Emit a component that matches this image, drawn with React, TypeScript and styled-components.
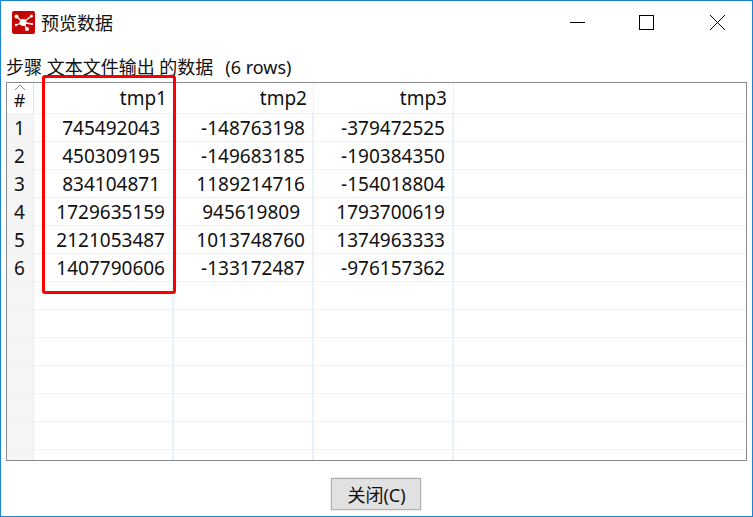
import { createGlobalStyle, styled } from 'styled-components';

const GlobalStyle = createGlobalStyle`
  html, body {
    margin: 0;
    padding: 0;
    background: #fff;
  }
  body {
    font-family: "Noto Sans", "Noto Sans CJK SC", sans-serif;
    color: #111;
  }
`;

const columns = ['tmp1', 'tmp2', 'tmp3'];

// trailing blanks are in the source data, the numbers are formatted that way
const rows = [
  ['745492043 ', '-148763198', '-379472525'],
  ['450309195 ', '-149683185', '-190384350'],
  ['834104871 ', '1189214716', '-154018804'],
  ['1729635159', '945619809 ', '1793700619'],
  ['2121053487', '1013748760', '1374963333'],
  ['1407790606', '-133172487', '-976157362'],
];

const EMPTY_ROWS = 7;

const AppIcon = () => (
  <svg width="23" height="23" viewBox="0 0 23 23">
    <rect width="23" height="23" rx="2" fill="#c70404" />
    <g stroke="#fff" strokeWidth="1.3" strokeLinecap="round">
      <line x1="11" y1="11.5" x2="4.5" y2="5.5" />
      <line x1="11" y1="11.5" x2="4" y2="14" />
      <line x1="11" y1="11.5" x2="15" y2="18" />
      <line x1="11" y1="11.5" x2="19.5" y2="5" />
      <line x1="11" y1="11.5" x2="20" y2="13" />
    </g>
    <circle cx="11" cy="11.5" r="3.4" fill="#fff" />
    <circle cx="4.5" cy="5.5" r="2" fill="#fff" />
    <circle cx="19.5" cy="5" r="1.5" fill="#fff" />
    <circle cx="15" cy="18" r="2" fill="#fff" />
    <circle cx="4" cy="14" r="1.2" fill="#fff" />
    <circle cx="20" cy="13" r="1.1" fill="#fff" />
  </svg>
);

const MinimizeIcon = () => (
  <svg width="15" height="15" viewBox="0 0 15 15">
    <line x1="0" y1="7.5" x2="15" y2="7.5" stroke="#000" strokeWidth="1" />
  </svg>
);

const MaximizeIcon = () => (
  <svg width="15" height="15" viewBox="0 0 15 15">
    <rect x="0.5" y="0.5" width="14" height="14" fill="none" stroke="#000" strokeWidth="1" />
  </svg>
);

const CloseIcon = () => (
  <svg width="15" height="15" viewBox="0 0 15 15">
    <path d="M0 0L15 15M15 0L0 15" fill="none" stroke="#000" strokeWidth="1" />
  </svg>
);

export default function App() {
  return (
    <>
      <GlobalStyle />
      <Styled.Window>
        <Styled.TitleBar>
          <AppIcon />
          <Styled.Title>预览数据</Styled.Title>
          <Styled.Caption>
            <Styled.CaptionButton><MinimizeIcon /></Styled.CaptionButton>
            <Styled.CaptionButton><MaximizeIcon /></Styled.CaptionButton>
            <Styled.CaptionButton><CloseIcon /></Styled.CaptionButton>
          </Styled.Caption>
        </Styled.TitleBar>
        <Styled.Label>
          步骤 文本文件输出 的数据
          <Styled.RowCount>(6 rows)</Styled.RowCount>
        </Styled.Label>
        <Styled.TableBox>
          <Styled.HeaderRow>
            <Styled.SortCell>
              <Styled.SortArrow viewBox="0 0 10 5" width="10" height="5">
                <path d="M0 5L5 0L10 5" fill="none" stroke="#888" strokeWidth="1" />
              </Styled.SortArrow>
              #
            </Styled.SortCell>
            {columns.map(name => (
              <Styled.HeaderCell key={name}>{name}</Styled.HeaderCell>
            ))}
          </Styled.HeaderRow>
          <Styled.Body>
            {rows.map((row, index) => (
              <Styled.Row key={index}>
                <Styled.IndexCell>{index + 1}</Styled.IndexCell>
                {row.map((value, col) => (
                  <Styled.Cell key={col}>{value}</Styled.Cell>
                ))}
              </Styled.Row>
            ))}
            {Array.from({ length: EMPTY_ROWS }, (_, index) => (
              <Styled.Row key={index}>
                <Styled.IndexCell />
                {columns.map(name => (
                  <Styled.Cell key={name} />
                ))}
              </Styled.Row>
            ))}
          </Styled.Body>
          <Styled.Highlight />
        </Styled.TableBox>
        <Styled.Footer>
          <Styled.CloseButton>关闭(C)</Styled.CloseButton>
        </Styled.Footer>
      </Styled.Window>
    </>
  );
}

const Styled = {
  Window: styled.div`
    box-sizing: border-box;
    width: 753px;
    height: 517px;
    border: 1px solid #1883d7;
    display: flex;
    flex-direction: column;
    background: #fff;
    overflow: hidden;
  `,
  TitleBar: styled.div`
    box-sizing: border-box;
    display: flex;
    align-items: center;
    height: 45px;
    padding: 0 0 2px 11px;
    flex-shrink: 0;
  `,
  Title: styled.div`
    margin-left: 6px;
    font-size: 18px;
    line-height: 24px;
  `,
  Caption: styled.div`
    margin-left: auto;
    display: flex;
  `,
  CaptionButton: styled.div`
    box-sizing: border-box;
    width: 70px;
    height: 43px;
    display: flex;
    align-items: center;
    justify-content: center;
    &:nth-child(2) {
      padding-right: 2px;
    }
  `,
  Label: styled.div`
    height: 36px;
    box-sizing: border-box;
    padding: 9px 0 0 5px;
    font-size: 18px;
    line-height: 24px;
    white-space: nowrap;
  `,
  RowCount: styled.span`
    margin-left: 12px;
  `,
  TableBox: styled.div`
    position: relative;
    box-sizing: border-box;
    display: flex;
    flex-direction: column;
    margin: 0 5px;
    height: 379px;
    border: 1px solid #868b90;
  `,
  HeaderRow: styled.div`
    display: flex;
    height: 31px;
    flex-shrink: 0;
    box-sizing: border-box;
    border-bottom: 1px solid #f0f0f0;
  `,
  Body: styled.div`
    flex: 1;
    min-height: 0;
    overflow: hidden;
  `,
  Row: styled.div`
    display: flex;
    height: 28px;
    box-sizing: border-box;
    border-bottom: 1px solid #f0f0f0;
  `,
  SortCell: styled.div`
    position: relative;
    width: 27px;
    box-sizing: border-box;
    padding: 5px 1px 0 0;
    text-align: center;
    font-size: 18px;
    line-height: 24px;
    border-right: 1px solid #e4e4e4;
  `,
  SortArrow: styled.svg`
    position: absolute;
    left: 8px;
    top: 2px;
  `,
  HeaderCell: styled.div`
    width: 140px;
    box-sizing: border-box;
    padding: 3px 6px 0 0;
    text-align: right;
    font-size: 19px;
    line-height: 24px;
    border-right: 1px solid #f1f1f1;
  `,
  IndexCell: styled.div`
    width: 27px;
    box-sizing: border-box;
    background: #f5f5f5;
    padding-right: 1px;
    text-align: center;
    font-size: 19px;
    line-height: 28px;
    border-right: 1px solid #e8eef8;
  `,
  Cell: styled.div`
    width: 140px;
    box-sizing: border-box;
    padding-right: 7px;
    text-align: right;
    font-size: 19px;
    line-height: 28px;
    white-space: pre;
    border-right: 2px solid #e8f0fa;
  `,
  Highlight: styled.div`
    position: absolute;
    left: 35px;
    top: -8px;
    width: 134px;
    height: 219px;
    box-sizing: border-box;
    border: 3px solid #fa0000;
    border-radius: 3px;
  `,
  Footer: styled.div`
    flex: 1;
    display: flex;
    justify-content: center;
    align-items: flex-start;
    padding: 17px 1px 0 0;
  `,
  CloseButton: styled.button`
    width: 90px;
    height: 32px;
    box-sizing: border-box;
    padding: 0 0 0 1px;
    background: #e1e1e1;
    border: 1px solid #adadad;
    box-shadow: 0 0 0 1px #f3f3f3;
    font-family: "Noto Sans", "Noto Sans CJK SC", sans-serif;
    font-size: 18px;
    color: #111;
  `,
};
